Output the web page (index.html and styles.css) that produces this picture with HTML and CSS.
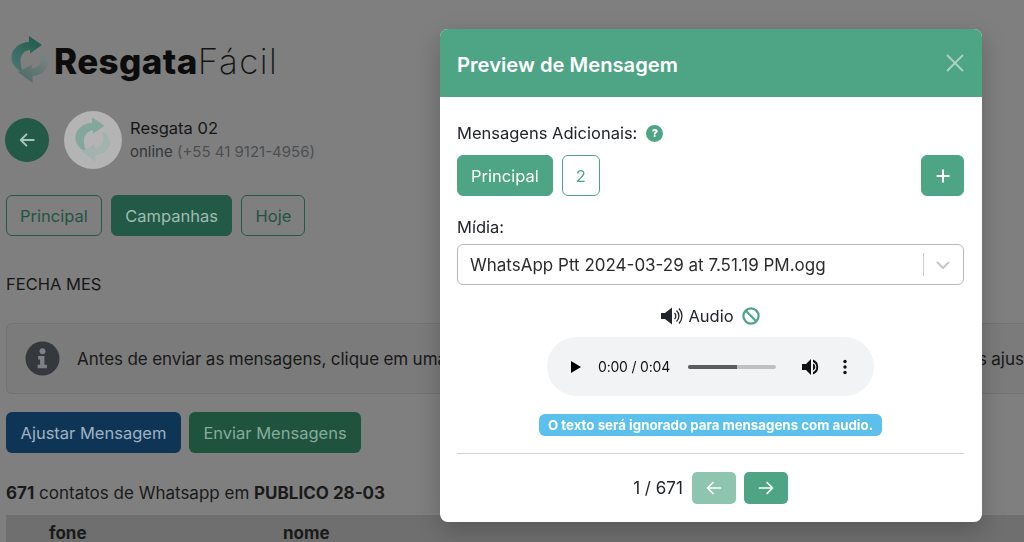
FILE: index.html
```html
<!DOCTYPE html>
<html lang="pt-BR">
<head>
<meta charset="utf-8">
<title>Preview de Mensagem</title>
<link rel="stylesheet" href="styles.css">
</head>
<body>
<svg class="defs" width="0" height="0" aria-hidden="true">
  <defs>
    <linearGradient id="grad-top" x1="0.8" y1="0" x2="0.1" y2="1">
      <stop offset="0" stop-color="#1f5c4b"/>
      <stop offset="1" stop-color="#4c7873"/>
    </linearGradient>
    <linearGradient id="grad-bottom" x1="0.9" y1="0" x2="0.1" y2="1">
      <stop offset="0" stop-color="#7d8584"/>
      <stop offset="1" stop-color="#4a6a65"/>
    </linearGradient>
    <symbol id="cycle-top" viewBox="0 0 40 50">
      <path d="M19 1 32 10 20 18.500V15C14 15.500 10.500 20 10.500 26 10.500 30 11.500 34 13.500 37.500 5.500 34.500 1 28 1.500 21.500 2 13.500 10 7 19 7Z"/>
    </symbol>
    <symbol id="cycle-bottom" viewBox="0 0 40 50">
      <path d="M8 37 22 29.500V33.500C27.500 33 31 29 31 24 31 21 30 18 29 16 35 19 38.500 23 38 28 37.500 35.500 30 41 22.500 41V48Z"/>
    </symbol>
  </defs>
</svg>

<main class="page">
  <div class="logo">
    <svg class="logo-icon" viewBox="0 0 40 50" aria-hidden="true">
      <use href="#cycle-top" class="logo-top"/>
      <use href="#cycle-bottom" class="logo-bottom"/>
    </svg>
    <span class="logo-text"><b>Resgata</b><span>Fácil</span></span>
  </div>

  <div class="contact">
    <button class="back" aria-label="Voltar">
      <svg viewBox="0 0 16 16" width="18" height="18"><path d="M14 8H2.500M7.500 3 2.500 8l5 5" class="arrow"/></svg>
    </button>
    <div class="avatar">
      <svg viewBox="0 0 40 50" width="38" height="48" aria-hidden="true">
        <use href="#cycle-top" class="avatar-top"/>
        <use href="#cycle-bottom" class="avatar-bottom"/>
      </svg>
    </div>
    <div class="contact-info">
      <div class="contact-name">Resgata 02</div>
      <div class="contact-status">online <span>(+55 41 9121-4956)</span></div>
    </div>
  </div>

  <nav class="tabs">
    <a class="tab">Principal</a>
    <a class="tab tab-on">Campanhas</a>
    <a class="tab">Hoje</a>
  </nav>

  <p class="campaign">FECHA MES</p>

  <div class="notice">
    <svg class="notice-icon" viewBox="0 0 36 36" aria-hidden="true">
      <circle cx="18" cy="18" r="17.500"/>
      <circle cx="18" cy="10.500" r="3" class="notice-i"/>
      <path d="M13.500 15.500h6.500v9h2.500v3.500h-9.500v-3.500h2.500v-5.500h-2z" class="notice-i"/>
    </svg>
    <span>Antes de enviar as mensagens, clique em uma linha da tabela abaixo para visualizar a prévia dos envios e fazer os ajustes necessários</span>
  </div>

  <div class="actions">
    <button class="btn btn-blue">Ajustar Mensagem</button>
    <button class="btn btn-green">Enviar Mensagens</button>
  </div>

  <p class="count"><b>671</b> contatos de Whatsapp em <b>PUBLICO 28-03</b></p>

  <div class="table-head">
    <span class="col-fone">fone</span>
    <span class="col-nome">nome</span>
  </div>
</main>

<section class="modal" role="dialog" aria-label="Preview de Mensagem">
  <header class="modal-head">
    <h2>Preview de Mensagem</h2>
    <svg class="close" viewBox="0 0 18 18" width="18" height="18" aria-hidden="true"><path d="M1 1l16 16M17 1 1 17"/></svg>
  </header>
  <div class="modal-body">
    <div class="label-row">
      <span>Mensagens Adicionais:</span>
      <span class="help">?</span>
    </div>
    <div class="msg-row">
      <button class="msg msg-on">Principal</button>
      <button class="msg msg-num">2</button>
      <button class="msg msg-add" aria-label="Adicionar">
        <svg viewBox="0 0 14 14" width="14" height="14"><path d="M7 .5v13M.5 7h13"/></svg>
      </button>
    </div>
    <div class="media-label">Mídia:</div>
    <div class="select">
      <span class="select-value">WhatsApp Ptt 2024-03-29 at 7.51.19 PM.ogg</span>
      <span class="select-sep"></span>
      <svg class="select-arrow" viewBox="0 0 14 8" width="14" height="8" aria-hidden="true"><path d="M1 1l6 6 6-6"/></svg>
    </div>
    <div class="audio-title">
      <svg class="speaker" viewBox="0 0 22 18" width="22" height="18" aria-hidden="true">
        <path d="M0 6h4l7-5.500v17L4 12H0z" class="speaker-body"/>
        <path d="M13.500 6a4 4 0 0 1 0 6M15.500 3.500a7.500 7.500 0 0 1 0 11M18 1.500a11 11 0 0 1 0 15" class="speaker-wave"/>
      </svg>
      <span>Audio</span>
      <svg class="ban" viewBox="0 0 18 18" width="18" height="18" aria-hidden="true"><circle cx="9" cy="9" r="7.600"/><path d="M3.800 3.800l10.400 10.400"/></svg>
    </div>
    <div class="player">
      <svg class="play" viewBox="0 0 10 12" width="10" height="12" aria-hidden="true"><path d="M0 0l10 6-10 6z"/></svg>
      <span class="time">0:00 / 0:04</span>
      <div class="track"><div class="track-fill"></div></div>
      <svg class="volume" viewBox="0 0 18 18" width="18" height="18" aria-hidden="true">
        <path d="M0 6h4l5-5v16l-5-5H0z"/>
        <path d="M11 1.500a8 8 0 0 1 0 15v-2.400a5.600 5.600 0 0 0 0-10.200zM11 5.500a3.800 3.800 0 0 1 0 7z"/>
      </svg>
      <svg class="dots" viewBox="0 0 4 16" width="4" height="16" aria-hidden="true"><circle cx="2" cy="2.500" r="1.700"/><circle cx="2" cy="8" r="1.700"/><circle cx="2" cy="13.500" r="1.700"/></svg>
    </div>
    <div class="badge-row"><span class="badge">O texto será ignorado para mensagens com audio.</span></div>
    <hr class="rule">
    <div class="pager">
      <span class="pager-count">1 / 671</span>
      <button class="page-btn page-off" aria-label="Anterior">
        <svg viewBox="0 0 16 16" width="16" height="16"><path d="M14.500 8H1.500M7 2.500 1.500 8 7 13.500"/></svg>
      </button>
      <button class="page-btn" aria-label="Próximo">
        <svg viewBox="0 0 16 16" width="16" height="16"><path d="M1.500 8h13M9 2.500 14.500 8 9 13.500"/></svg>
      </button>
    </div>
  </div>
</section>
</body>
</html>
```
FILE: styles.css
```css
* { box-sizing: border-box; }
html, body { margin: 0; height: 100%; }
body {
  background: #7f7f7f;
  color: #1a1a1a;
  font-family: Inter, "Liberation Sans", sans-serif;
  font-size: 16.5px;
  overflow: hidden;
}
button { font: inherit; cursor: pointer; }
.defs { position: absolute; }

.page { padding: 35px 0 0 6px; width: 1040px; height: 542px; overflow: hidden; }

.logo { display: flex; align-items: center; height: 50px; margin-left: 4px; gap: 4px; }
.logo-icon { width: 40px; height: 50px; flex: none; }
.logo-top { fill: url(#grad-top); }
.logo-bottom { fill: url(#grad-bottom); }
.logo-text { font-size: 35px; line-height: 50px; color: #0c0c0c; letter-spacing: 0.4px; padding-top: 2px; }
.logo-text b { font-weight: 800; }
.logo-text span { font-weight: 200; color: #141414; letter-spacing: 1.4px; }

.contact { display: flex; align-items: center; margin-top: 26px; height: 58px; }
.back {
  width: 44px; height: 44px; border-radius: 50%; border: 0; padding: 0; margin-left: -1px;
  background: #235a47; display: flex; align-items: center; justify-content: center; flex: none;
}
.arrow { fill: none; stroke: #a9c4ba; stroke-width: 1.700; stroke-linecap: round; stroke-linejoin: round; }
.avatar {
  width: 58px; height: 58px; border-radius: 50%; background: #b4b4b4; margin-left: 15px;
  display: flex; align-items: center; justify-content: center; flex: none;
}
.avatar-top { fill: #83a69d; }
.avatar-bottom { fill: #a3b2ae; }
.contact-info { margin-left: 8px; padding-bottom: 1px; }
.contact-name { line-height: 24px; color: #161616; }
.contact-status { font-size: 15px; line-height: 24px; color: #34373a; }
.contact-status span { color: #4b4f52; }

.tabs { display: flex; gap: 9px; margin-top: 26px; }
.tab {
  height: 41px; padding: 0 13px; border: 1px solid #235a47; border-radius: 6px;
  color: #1f5443; line-height: 40px; background: transparent;
}
.tab-on { background: #235a47; color: #a0bdb2; padding: 0 13.500px; }

.campaign { margin: 38px 0 0; line-height: 20px; color: #161616; }

.notice {
  display: flex; align-items: center; margin-top: 29px; height: 71px; padding-left: 18px;
  background: #7b7b7b; border: 1px solid #737373; border-radius: 6px;
  white-space: nowrap; color: #191919; font-size: 17px; word-spacing: -0.4px;
}
.notice-icon { width: 35px; height: 35px; flex: none; margin-right: 17px; }
.notice-icon circle:first-child { fill: #35383c; }
.notice-i { fill: #7f8285; }

.actions { display: flex; gap: 8px; margin-top: 18px; }
.btn { height: 41px; padding: 1px 14.500px 0; border: 0; border-radius: 6px; }
.btn-blue { background: #0f3556; color: #9fb2c2; }
.btn-green { background: #1f533e; color: #86ab9b; }

.count { margin: 29px 0 0; line-height: 22px; color: #1a1a1a; font-size: 17px; }
.count b { font-weight: 700; }

.table-head {
  display: flex; height: 40px; margin-top: 11px; background: #6f6f6f;
  font-weight: 700; color: #1a1a1a; line-height: 36px; font-size: 17px;
}
.col-fone { margin-left: 43px; width: 234px; }

.modal {
  position: fixed; left: 440px; top: 29px; width: 542px; height: 493px;
  background: #fff; border-radius: 8px; overflow: hidden;
  box-shadow: 0 8px 24px rgba(0, 0, 0, 0.22);
  display: flex; flex-direction: column;
}
.modal-head {
  height: 68px; flex: none; background: #4ea585; color: #fff;
  display: flex; align-items: center; justify-content: space-between; padding: 0 18px 0 17px;
}
.modal-head h2 { margin: 0; padding-top: 2px; font-size: 20.200px; font-weight: 600; }
.close { fill: none; stroke: #a9d4c4; stroke-width: 1.800; }
.modal-body { padding: 24px 18px 0 17px; color: #212529; }

.label-row { display: flex; align-items: center; gap: 9px; height: 24px; }
.help {
  width: 17px; height: 17px; border-radius: 50%; background: #4ea585; color: #fff;
  font-size: 11px; font-weight: 800; text-align: center; line-height: 17px;
}
.msg-row { display: flex; gap: 9px; margin-top: 10px; }
.msg { height: 41px; border-radius: 6px; border: 1px solid #4ea585; padding: 0 13px; }
.msg-on { background: #4ea585; color: #fff; }
.msg-num { background: #fff; color: #4ea585; width: 38px; padding: 0; }
.msg-add {
  background: #4ea585; width: 43px; margin-left: auto; padding: 0;
  display: flex; align-items: center; justify-content: center;
}
.msg-add path { stroke: #fff; stroke-width: 2; }

.media-label { margin-top: 19px; line-height: 24px; }
.select {
  display: flex; align-items: center; height: 41px; margin-top: 5px; padding: 0 13px 0 12px;
  border: 1px solid #b8b8b8; border-radius: 6px; font-size: 17px;
}
.select-value { flex: 1; color: #2b2b2b; }
.select-sep { width: 1px; height: 23px; background: #ccc; margin-right: 12px; }
.select-arrow { fill: none; stroke: #c8c8c8; stroke-width: 2; }

.audio-title {
  display: flex; align-items: center; justify-content: center; gap: 5px;
  height: 24px; margin-top: 19px;
}
.speaker-body { fill: #212529; }
.speaker-wave { fill: none; stroke: #212529; stroke-width: 1.300; }
.ban { fill: none; stroke: #4ea585; stroke-width: 2.200; margin-left: 3px; }

.player {
  display: flex; align-items: center; width: 327px; height: 59px; margin: 9px auto 0;
  padding: 0 0 0 24px; background: #f1f3f4; border-radius: 30px; color: #111;
}
.play { fill: #000; flex: none; }
.time { font-size: 14px; margin-left: 17px; width: 73px; white-space: nowrap; letter-spacing: -0.2px; }
.track { width: 88px; height: 4px; margin-left: 17px; border-radius: 2px; background: #bfc0c1; overflow: hidden; flex: none; }
.track-fill { width: 56%; height: 100%; background: #5b5b5b; }
.volume { fill: #111; margin-left: 26px; flex: none; }
.dots { fill: #111; margin-left: 23px; flex: none; }

.badge-row { display: flex; justify-content: center; margin-top: 18px; }
.badge {
  height: 22px; padding: 0 9px; border-radius: 6px; background: #5bc0eb; color: #fff;
  font-size: 13.300px; font-weight: 700; line-height: 22px; white-space: nowrap;
}
.rule { margin: 17px 0 0; border: 0; border-top: 1px solid #d0d3d5; }

.pager { display: flex; align-items: center; justify-content: center; gap: 8px; margin-top: 18px; }
.pager-count { margin-right: 1px; color: #212529; font-size: 17px; }
.page-btn {
  width: 44px; height: 32px; border: 0; border-radius: 5px; background: #4ea585; padding: 0;
  display: flex; align-items: center; justify-content: center;
}
.page-btn path { fill: none; stroke: #fff; stroke-width: 1.700; stroke-linecap: round; stroke-linejoin: round; }
.page-off { background: #8dc5b0; }
```
